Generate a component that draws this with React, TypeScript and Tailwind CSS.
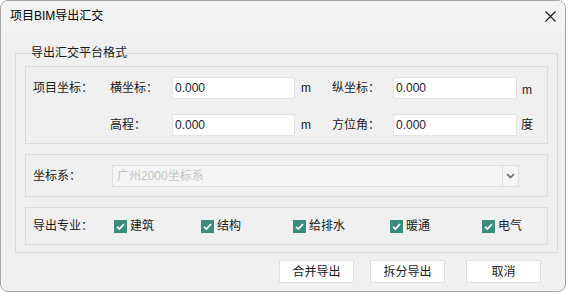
import React from "react";

const font = { fontFamily: '"Liberation Sans", "Noto Sans CJK SC", sans-serif' };

const Field: React.FC<{ value: string; width: string }> = ({ value, width }) => (
  <div className={`${width} h-[22px] bg-white border border-[#e3e3e3] flex items-center pl-[2px] text-[12px] text-[#1c1c2c]`}>
    {value}
  </div>
);

const Check: React.FC<{ label: string; width: string }> = ({ label, width }) => (
  <div className={`${width} flex items-center`}>
    <span className="w-[13px] h-[13px] bg-[#3a8c7c] flex items-center justify-center">
      <svg width="11" height="11" viewBox="0 0 11 11">
        <path d="M2 5.8 L4.4 8 L9 3" fill="none" stroke="white" strokeWidth="1.8" />
      </svg>
    </span>
    <span className="ml-[3px]">{label}</span>
  </div>
);

const Button: React.FC<{ label: string; className?: string }> = ({ label, className }) => (
  <button className={`w-[75px] h-[23px] bg-white border border-[#e0e0e0] text-[12px] text-[#1a1a1a] ${className ?? ""}`}>
    {label}
  </button>
);

export default function App() {
  return (
    <div className="w-[568px] h-[294px] bg-white text-[12px] text-[#1a1a1a]" style={font}>
      <div className="w-[566px] h-[292px] border border-[#a6a6a6] rounded-[8px] overflow-hidden flex flex-col bg-[#f0f0f0]">
        {/* Title bar */}
        <div className="h-[30px] bg-[#f3f3f3] flex items-center justify-between pl-[9px] pr-[8px]">
          <span className="text-[12px] text-black">项目BIM导出汇交</span>
          <svg width="11" height="11" viewBox="0 0 11 11" className="mr-[1px]">
            <path d="M0.5 0.5 L10.5 10.5 M10.5 0.5 L0.5 10.5" stroke="#1a1a1a" strokeWidth="1.1" />
          </svg>
        </div>

        {/* Body */}
        <div className="flex-1 pt-[14px] pl-[14px]">
          <fieldset className="w-[543px] border border-[#dcdcdc] pl-[9px] pr-[9px] pb-[7px]">
            <legend className="ml-[5px] px-[1px] leading-[16px]">导出汇交平台格式</legend>

            {/* Project coordinates */}
            <div className="mt-[5px] border border-[#dcdcdc] pl-[7px] pt-[10px] pb-[7px] flex flex-col gap-[15px]">
              <div className="flex items-center h-[22px]">
                <span className="w-[77px]">项目坐标：</span>
                <span className="w-[62px]">横坐标：</span>
                <Field value="0.000" width="w-[123px]" />
                <span className="w-[37px] pl-[6px]">m</span>
                <span className="w-[61px]">纵坐标：</span>
                <Field value="0.000" width="w-[124px]" />
                <span className="pl-[5px] pt-[3px]">m</span>
              </div>
              <div className="flex items-center h-[22px]">
                <span className="w-[77px]" />
                <span className="w-[62px]">高程：</span>
                <Field value="0.000" width="w-[123px]" />
                <span className="w-[37px] pl-[6px]">m</span>
                <span className="w-[61px]">方位角：</span>
                <Field value="0.000" width="w-[124px]" />
                <span className="pl-[4px]">度</span>
              </div>
            </div>

            {/* Coordinate system */}
            <div className="mt-[10px] h-[43px] border border-[#dcdcdc] pl-[7px] flex items-center">
              <span className="w-[79px]">坐标系：</span>
              <div className="w-[407px] h-[22px] bg-[#f5f5f5] border border-[#e0e0e0] flex items-center">
                <span className="flex-1 pl-[4px] text-[#c4c4c4]">广州2000坐标系</span>
                <span className="w-[16px] h-full border-l border-[#e0e0e0] flex items-center justify-center">
                  <svg width="9" height="6" viewBox="0 0 9 6">
                    <path d="M1 1 L4.5 4.5 L8 1" fill="none" stroke="#6a6a6a" strokeWidth="1.6" />
                  </svg>
                </span>
              </div>
            </div>

            {/* Disciplines */}
            <div className="mt-[10px] h-[38px] border border-[#dcdcdc] pl-[7px] flex items-center">
              <span className="w-[81px]">导出专业：</span>
              <Check label="建筑" width="w-[87px]" />
              <Check label="结构" width="w-[92px]" />
              <Check label="给排水" width="w-[97px]" />
              <Check label="暖通" width="w-[92px]" />
              <Check label="电气" width="w-auto" />
            </div>
          </fieldset>

          <div className="mt-[7px] flex">
            <Button label="合并导出" className="ml-[264px]" />
            <Button label="拆分导出" className="ml-[16px]" />
            <Button label="取消" className="ml-[21px]" />
          </div>
        </div>
      </div>
    </div>
  );
}
